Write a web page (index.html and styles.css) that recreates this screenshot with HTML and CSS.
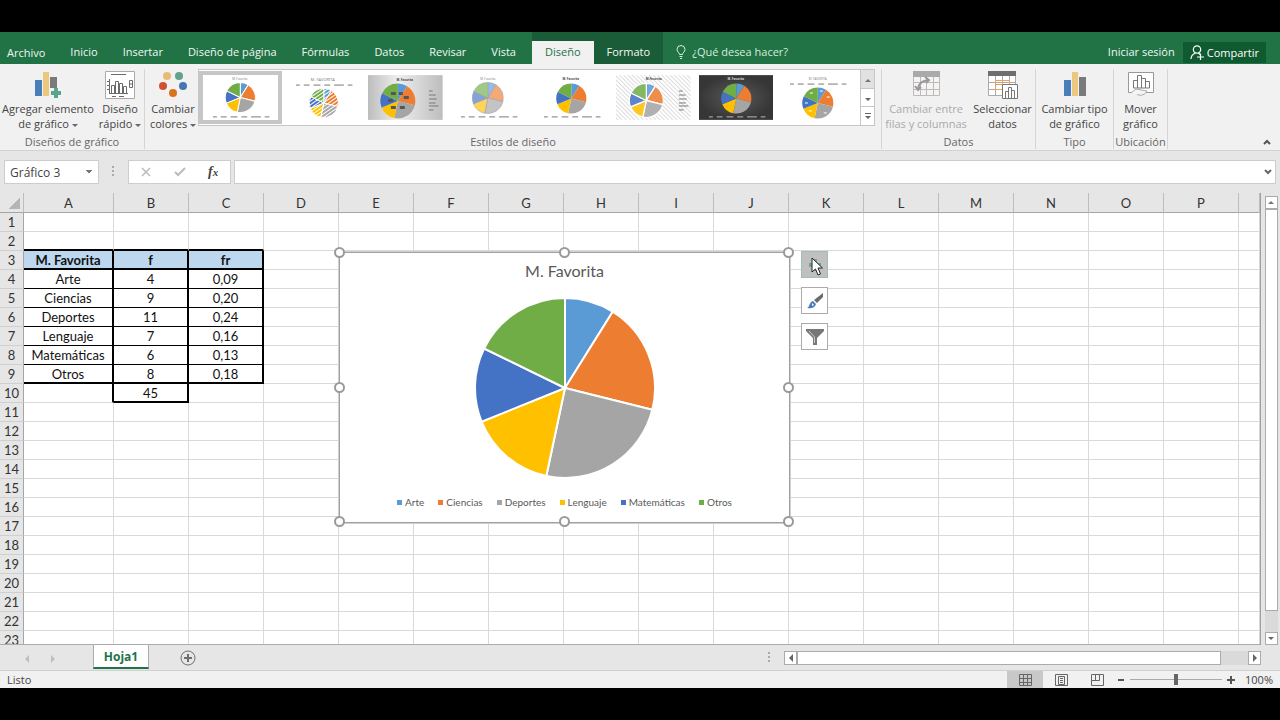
FILE: index.html
```html
<!doctype html>
<html lang="es">
<head>
    <meta charset="UTF-8">
    <meta name="viewport" content="width=device-width, initial-scale=1.0">
    <title>M. Favorita</title>
    <link rel="stylesheet" href="styles.css">
</head>
<body>
    <!-- shared drawings -->
    <svg class="defs" width="0" height="0">
        <defs>
            <symbol id="pie" viewBox="-92 -92 184 184">
                <path fill="#5b9bd5" d="M0 0V-90A90 90 0 0 1 47.7 -76.3Z"/>
                <path fill="#ed7d31" d="M0 0L47.7 -76.3A90 90 0 0 1 87.3 21.8Z"/>
                <path fill="#a5a5a5" d="M0 0L87.3 21.8A90 90 0 0 1 -18.7 88Z"/>
                <path fill="#ffc000" d="M0 0L-18.7 88A90 90 0 0 1 -83.4 33.7Z"/>
                <path fill="#4472c4" d="M0 0L-83.4 33.7A90 90 0 0 1 -80.9 -39.5Z"/>
                <path fill="#70ad47" d="M0 0L-80.9 -39.5A90 90 0 0 1 0 -90Z"/>
            </symbol>
            <pattern id="stripes" width="3" height="3" patternUnits="userSpaceOnUse" patternTransform="rotate(-35)">
                <rect width="3" height="2" fill="#fff"/>
            </pattern>
            <mask id="striped">
                <rect width="75" height="45" fill="url(#stripes)"/>
            </mask>
            <pattern id="hatch" width="3" height="3" patternUnits="userSpaceOnUse" patternTransform="rotate(45)">
                <rect width="3" height="3" fill="#fff"/>
                <rect width="3" height="1" fill="#dcdcdc"/>
            </pattern>
            <linearGradient id="silver">
                <stop offset="0" stop-color="#bdbdbd"/>
                <stop offset=".4" stop-color="#eee"/>
                <stop offset="1" stop-color="#bdbdbd"/>
            </linearGradient>
            <radialGradient id="dark">
                <stop offset="0" stop-color="#5a5a5a"/>
                <stop offset="1" stop-color="#363636"/>
            </radialGradient>
            <symbol id="keys" viewBox="0 0 58 2">
                <path d="M0 1H4M8 1H14M18 1H25M29 1H35M39 1H49M53 1H58" stroke="currentColor" stroke-width="1"/>
            </symbol>
            <symbol id="keys-side" viewBox="0 0 10 22">
                <path d="M0 1H4M0 5H7M0 9H8M0 13H7M0 16H10M0 20H5" stroke="#777" stroke-width="1"/>
            </symbol>
        </defs>
    </svg>

    <div class="app">
        <header class="titlebar">
            <nav class="tabs">
                <button class="tab tab-file">Archivo</button>
                <button class="tab">Inicio</button>
                <button class="tab">Insertar</button>
                <button class="tab">Diseño de página</button>
                <button class="tab">Fórmulas</button>
                <button class="tab">Datos</button>
                <button class="tab">Revisar</button>
                <button class="tab">Vista</button>
                <span class="context-tabs">
                    <button class="tab active">Diseño</button>
                    <button class="tab">Formato</button>
                </span>
                <button class="tab tell-me">
                    <svg width="10" height="14" viewBox="0 0 10 14" fill="none" stroke="#d5ecdd">
                        <path d="M3.500 9.500C3.500 7.500 1 7 1 4.500A4 4 0 0 1 9 4.500C9 7 6.500 7.500 6.500 9.500ZM3.500 11.500H6.500M4 13.500H6"/>
                    </svg>
                    ¿Qué desea hacer?
                </button>
            </nav>
            <button class="tab sign-in">Iniciar sesión</button>
            <button class="share">
                <svg width="14" height="15" viewBox="0 0 14 15" fill="none" stroke="#fff" stroke-width="1.200">
                    <circle cx="7" cy="4.500" r="3.700"/>
                    <path d="M1 14C1 11 3 9 5.500 8M8.500 8L10 9.500M7 12H14M10.500 8.500V15"/>
                </svg>
                Compartir
            </button>
        </header>

        <section class="ribbon">
            <div class="group group-layouts">
                <div class="tools">
                    <button class="tool">
                        <svg width="28" height="28" viewBox="0 0 28 28">
                            <path fill="#4a7ebb" d="M1 9H8V25H1Z"/>
                            <path fill="#ecc87e" d="M9 1H15V25H9Z"/>
                            <path fill="#7a7a7a" d="M16 6H23V17H16Z"/>
                            <path fill="#5aa58c" d="M20 17H24V20H27V24H24V27H20V24H17V20H20Z"/>
                        </svg>
                        <span>Agregar elemento<br>de gráfico <i class="arrow"></i></span>
                    </button>
                    <button class="tool">
                        <svg width="30" height="28" viewBox="0 0 30 28" fill="none" stroke="#6b6b6b">
                            <path fill="#fff" stroke="#aaa" d="M.5 .5H29.500V27.500H.5Z"/>
                            <path d="M6 3.500H21M4.500 8V23M2 10.500H4M2 14.500H4M2 18.500H4M4 22.500H23M7 25.500H11M14 25.500H19"/>
                            <path d="M6.500 22V14.500H9.500V22M10.500 22V10.500H13.500V22M14.500 22V12.500H17.500V22M18.500 22V15.500H21.500V22M24.500 9.500H27.500V16.500H24.500ZM24 13H28"/>
                        </svg>
                        <span>Diseño<br>rápido <i class="arrow"></i></span>
                    </button>
                </div>
                <h2>Diseños de gráfico</h2>
            </div>

            <div class="group group-styles">
                <div class="tools">
                    <button class="tool">
                        <svg width="28" height="28" viewBox="0 0 28 28">
                            <circle cx="8" cy="5" r="4" fill="#e8bd71"/>
                            <circle cx="20" cy="5" r="4" fill="#62a18c"/>
                            <circle cx="4" cy="15" r="4" fill="#cf5033"/>
                            <circle cx="24" cy="15" r="4" fill="#4676b4"/>
                            <circle cx="14" cy="22" r="4" fill="#d9731e"/>
                        </svg>
                        <span>Cambiar<br>colores <i class="arrow"></i></span>
                    </button>
                    <div class="gallery">
                        <div class="thumbs">
                            <button class="thumb selected" aria-label="Estilo 1">
                                <svg viewBox="0 0 75 45">
                                    <rect width="75" height="45" fill="#fff"/>
                                    <text x="37" y="5">M. Favorita</text>
                                    <use href="#pie" x="22" y="7" width="31" height="31" stroke="#fff" stroke-width="6"/>
                                    <use href="#keys" x="10" y="41" width="57" height="2"/>
                                </svg>
                            </button>
                            <button class="thumb" aria-label="Estilo 2">
                                <svg viewBox="0 0 75 45">
                                    <rect width="75" height="45" fill="#fff"/>
                                    <text class="wide" x="37" y="6">M. FAVORITA</text>
                                    <use href="#keys" x="10" y="9" width="57" height="2"/>
                                    <g mask="url(#striped)">
                                        <use href="#pie" x="23" y="13" width="30" height="30" stroke="#fff" stroke-width="6"/>
                                    </g>
                                </svg>
                            </button>
                            <button class="thumb" aria-label="Estilo 3">
                                <svg viewBox="0 0 75 45">
                                    <rect width="75" height="45" fill="url(#silver)"/>
                                    <text class="bold" x="37" y="6">M. Favorita</text>
                                    <use href="#pie" x="12" y="8" width="36" height="36"/>
                                    <path fill="#555" d="M23 17H28V20H23ZM31 17H35V20H31ZM36 21H41V24H36ZM20 24H25V27H20ZM23 31H28V34H23ZM32 31H37V34H32Z"/>
                                    <use href="#keys-side" x="61" y="15" width="10" height="22"/>
                                </svg>
                            </button>
                            <button class="thumb" aria-label="Estilo 4">
                                <svg viewBox="0 0 75 45">
                                    <rect width="75" height="45" fill="#fff"/>
                                    <text x="37" y="5">M. Favorita</text>
                                    <g opacity=".65">
                                        <use href="#pie" x="21" y="7" width="32" height="32" stroke="#667" stroke-width="3"/>
                                    </g>
                                    <use href="#keys" x="10" y="41" width="57" height="2"/>
                                </svg>
                            </button>
                            <button class="thumb" aria-label="Estilo 5">
                                <svg viewBox="0 0 75 45">
                                    <rect width="75" height="45" fill="#fff"/>
                                    <text class="bold" x="37" y="5">M. Favorita</text>
                                    <use href="#pie" x="22" y="8" width="31" height="31"/>
                                    <use href="#keys" x="10" y="41" width="57" height="2"/>
                                </svg>
                            </button>
                            <button class="thumb" aria-label="Estilo 6">
                                <svg viewBox="0 0 75 45">
                                    <rect width="75" height="45" fill="url(#hatch)"/>
                                    <text class="bold" x="38" y="5">M.Favorita</text>
                                    <g opacity=".85">
                                        <use href="#pie" x="13" y="8" width="35" height="35" stroke="#fff" stroke-width="7"/>
                                    </g>
                                    <use href="#keys-side" x="63" y="15" width="10" height="22"/>
                                </svg>
                            </button>
                            <button class="thumb" aria-label="Estilo 7">
                                <svg viewBox="0 0 75 45">
                                    <rect width="75" height="45" fill="url(#dark)"/>
                                    <text class="bold light" x="37" y="5">M. Favorita</text>
                                    <use href="#pie" x="22" y="8" width="31" height="31"/>
                                    <use class="light" href="#keys" x="10" y="41" width="57" height="2"/>
                                </svg>
                            </button>
                            <button class="thumb" aria-label="Estilo 8">
                                <svg viewBox="0 0 75 45">
                                    <rect width="75" height="45" fill="#fff"/>
                                    <text x="37" y="5">M. FAVORITA</text>
                                    <use href="#keys" x="9" y="8" width="57" height="2"/>
                                    <use href="#pie" x="21" y="12" width="32" height="32"/>
                                    <path stroke="#fff" d="M29 18H32M39 16H42M46 22H49M24 28H27M28 36H31M43 38H46"/>
                                </svg>
                            </button>
                        </div>
                        <div class="gallery-nav">
                            <button class="off" aria-label="Anterior"><i class="arrow up"></i></button>
                            <button aria-label="Siguiente"><i class="arrow"></i></button>
                            <button class="more" aria-label="Más"><i class="arrow"></i></button>
                        </div>
                    </div>
                </div>
                <h2>Estilos de diseño</h2>
            </div>

            <div class="group group-data">
                <div class="tools">
                    <button class="tool" disabled>
                        <svg width="28" height="28" viewBox="0 0 28 28" fill="none">
                            <path fill="#f7f3f3" stroke="#bbb" d="M1.500 1.500H27.500V24.500H1.500ZM1.500 11.500H27.500M1.500 18.500H27.500M8.500 5V24M14.500 5V24M21.500 5V24"/>
                            <path fill="#aaa" d="M1 0H28V6H1Z"/>
                            <path stroke="#999" stroke-width="2" d="M6 18C7 12 10 10 16 9M13 6L17 9L14 12M3 15L6 19L9 16"/>
                        </svg>
                        <span>Cambiar entre<br>filas y columnas</span>
                    </button>
                    <button class="tool">
                        <svg width="30" height="28" viewBox="0 0 30 28" fill="none">
                            <path fill="#fff" stroke="#aaa" d="M.5 1.500H27.500V24.500H.5ZM.5 11.500H27.500M.5 18.500H27.500M7.500 5V24M14.500 5V24M21.500 5V24"/>
                            <path stroke="#e9a35d" d="M7.500 9.500H21.500V18.500H7.500ZM14.500 9V18M7 13.500H21"/>
                            <path fill="#6e6e6e" d="M0 0H28V5H0Z"/>
                            <path fill="#fff" stroke="#777" d="M14.500 13.500H29.500V27.500H14.500ZM17.500 27V20.500H20.500V27M20.500 27V16.500H23.500V27M23.500 27V19.500H26.500V27"/>
                        </svg>
                        <span>Seleccionar<br>datos</span>
                    </button>
                </div>
                <h2>Datos</h2>
            </div>

            <div class="group group-type">
                <div class="tools">
                    <button class="tool">
                        <svg width="24" height="28" viewBox="0 0 24 28">
                            <path fill="#4a7ebb" d="M1 9H8V25H1Z"/>
                            <path fill="#ecc87e" d="M9 1H15V25H9Z"/>
                            <path fill="#7a7a7a" d="M16 6H23V25H16Z"/>
                        </svg>
                        <span>Cambiar tipo<br>de gráfico</span>
                    </button>
                </div>
                <h2>Tipo</h2>
            </div>

            <div class="group group-location">
                <div class="tools">
                    <button class="tool">
                        <svg width="28" height="28" viewBox="0 0 28 28" fill="none" stroke="#777">
                            <path fill="#fff" stroke="#999" d="M1.500 1.500H26.500V21.500H1.500Z"/>
                            <path d="M6.500 17V9.500H10.500V17ZM10.500 17V4.500H14.500V17ZM14.500 17V7.500H18.500V17ZM18.500 17V10.500H22.500V17Z"/>
                            <path fill="#f5f5f5" stroke="#aaa" d="M4 22L9 18L20 20C18 24 14 25 10 23.500"/>
                        </svg>
                        <span>Mover<br>gráfico</span>
                    </button>
                </div>
                <h2>Ubicación</h2>
            </div>

            <button class="collapse" aria-label="Contraer la cinta">
                <svg width="8" height="6" viewBox="0 0 8 6" fill="none" stroke="#555" stroke-width="2"><path d="M1 5L4 2L7 5"/></svg>
            </button>
        </section>

        <section class="formula-bar">
            <select class="name-box" aria-label="Cuadro de nombres">
                <option>Gráfico 3</option>
            </select>
            <span class="grip"></span>
            <div class="formula-buttons">
                <button aria-label="Cancelar">
                    <svg width="10" height="10" viewBox="0 0 10 10" stroke="#bbb" stroke-width="1.500"><path d="M1 1L9 9M9 1L1 9"/></svg>
                </button>
                <button aria-label="Introducir">
                    <svg width="12" height="10" viewBox="0 0 12 10" fill="none" stroke="#bbb" stroke-width="2"><path d="M1 5L4 8L11 1"/></svg>
                </button>
                <button class="fx" aria-label="Insertar función">f<sub>x</sub></button>
            </div>
            <div class="formula">
                <input type="text" aria-label="Barra de fórmulas">
                <svg width="8" height="6" viewBox="0 0 8 6" fill="none" stroke="#666" stroke-width="2"><path d="M1 1L4 4L7 1"/></svg>
            </div>
        </section>

        <main class="workspace">
            <div class="sheet">
                <table id="grid"></table>

                <figure class="chart">
                    <figcaption>M. Favorita</figcaption>
                    <svg class="chart-pie" width="184" height="184" stroke="#fff" stroke-width="2"><use href="#pie" width="184" height="184"/></svg>
                    <ul class="legend">
                        <li class="arte">Arte</li>
                        <li class="ciencias">Ciencias</li>
                        <li class="deportes">Deportes</li>
                        <li class="lenguaje">Lenguaje</li>
                        <li class="matematicas">Matemáticas</li>
                        <li class="otros">Otros</li>
                    </ul>
                    <i class="handle top left"></i>
                    <i class="handle top center"></i>
                    <i class="handle top right"></i>
                    <i class="handle middle left"></i>
                    <i class="handle middle right"></i>
                    <i class="handle bottom left"></i>
                    <i class="handle bottom center"></i>
                    <i class="handle bottom right"></i>
                    <div class="chart-buttons">
                        <button class="pressed" aria-label="Elementos de gráfico">
                            <svg width="14" height="14" viewBox="0 0 14 14"><path fill="#6aa792" d="M5 1H9V5H13V9H9V13H5V9H1V5H5Z"/></svg>
                        </button>
                        <button aria-label="Estilos de gráfico">
                            <svg width="18" height="18" viewBox="0 0 18 18">
                                <path fill="#6b6b6b" d="M17 1V5L11 11L8 8Z"/>
                                <path fill="#4a7ebb" d="M7 9L10 12C9 16 5 17 1 16C4 15 3 10 7 9Z"/>
                                <path fill="#fff" d="M6 11L8 13L6 14Z"/>
                            </svg>
                        </button>
                        <button aria-label="Filtros de gráfico">
                            <svg width="18" height="16" viewBox="0 0 18 16">
                                <path fill="#777" d="M0 0H18V2L11 9V16H7V9L0 2Z"/>
                                <path stroke="#ccc" d="M3 2L8.500 8V14" fill="none"/>
                            </svg>
                        </button>
                    </div>
                    <svg class="cursor" width="14" height="20" viewBox="0 0 14 20">
                        <path fill="#fff" stroke="#222" d="M1 1V15L4.500 12L7 18L9.500 17L7 11H11.500Z"/>
                    </svg>
                </figure>
            </div>
            <div class="vscroll">
                <button aria-label="Subir"><i class="arrow up"></i></button>
                <div class="track"><div class="bar"></div></div>
                <button aria-label="Bajar"><i class="arrow"></i></button>
            </div>
        </main>

        <footer class="sheet-bar">
            <button class="nav" aria-label="Hoja anterior"><i class="arrow back"></i></button>
            <button class="nav" aria-label="Hoja siguiente"><i class="arrow next"></i></button>
            <button class="sheet-tab">Hoja1</button>
            <button class="add-sheet" aria-label="Hoja nueva">
                <svg width="16" height="16" viewBox="0 0 16 16" fill="none" stroke="#6e6e6e">
                    <circle cx="8" cy="8" r="7"/>
                    <path stroke-width="2" d="M4 8H12M8 4V12"/>
                </svg>
            </button>
            <span class="grip"></span>
            <div class="hscroll">
                <button aria-label="Izquierda"><i class="arrow back"></i></button>
                <div class="track"><div class="bar"></div></div>
                <button aria-label="Derecha"><i class="arrow next"></i></button>
            </div>
        </footer>

        <div class="status">
            <span class="ready">Listo</span>
            <button class="view active" aria-label="Normal">
                <svg width="13" height="12" viewBox="0 0 13 12" fill="none" stroke="#666"><path d="M.5 .5H12.500V11.500H.5ZM4.500 0V12M8.500 0V12M0 4.500H13M0 8.500H13"/></svg>
            </button>
            <button class="view" aria-label="Diseño de página">
                <svg width="13" height="12" viewBox="0 0 13 12" fill="none" stroke="#666"><path d="M.5 .5H12.500V11.500H.5ZM3.500 2.500H9.500V10.500H3.500ZM5 4.500H8M5 6.500H8M5 8.500H8"/></svg>
            </button>
            <button class="view" aria-label="Vista previa de salto de página">
                <svg width="13" height="12" viewBox="0 0 13 12" fill="none" stroke="#666"><path d="M.5 .5H12.500V11.500H.5ZM.5 6.500H8.500V.5M4.500 0V6"/></svg>
            </button>
            <button class="zoom-step" aria-label="Alejar"><svg width="8" height="8" viewBox="0 0 8 8"><path fill="#555" d="M1 3H7V5H1Z"/></svg></button>
            <input class="zoom" type="range" min="0" max="100" value="50" aria-label="Zoom">
            <button class="zoom-step" aria-label="Acercar"><svg width="8" height="8" viewBox="0 0 8 8"><path fill="#555" d="M3 0H5V3H8V5H5V8H3V5H0V3H3Z"/></svg></button>
            <span class="percent">100%</span>
        </div>
    </div>
    <script src="script.js"></script>
</body>
</html>
```

FILE: styles.css
```css
* {
    margin: 0;
    padding: 0;
    box-sizing: border-box;
}
body {
    min-height: 100vh;
    padding: 32px 0;
    background-color: #000;
    font: 11px/15px "Open Sans", "Noto Sans", sans-serif;
    color: #444;
    display: flex;
    flex-direction: column;
}
button, select, input {
    font: inherit;
    color: inherit;
    border: 0;
    background: none;
    outline: none;
}
svg {
    display: block;
}
.defs {
    position: absolute;
}
.app {
    flex: 1;
    display: flex;
    flex-direction: column;
    background-color: #e6e6e6;
    overflow: hidden;
}
.arrow {
    display: inline-block;
    border: 3px solid transparent;
    border-top-color: #666;
    border-bottom: 0;
    vertical-align: middle;
}
.arrow.up {
    border: 3px solid transparent;
    border-bottom-color: #777;
    border-top: 0;
}
.arrow.back {
    border: 4px solid transparent;
    border-right-color: #666;
    border-left: 0;
}
.arrow.next {
    border: 4px solid transparent;
    border-left-color: #666;
    border-right: 0;
}
.grip {
    width: 2px;
    height: 12px;
    background: repeating-linear-gradient(#aaa 0 2px, transparent 2px 4px);
}

/* title bar */
.titlebar {
    height: 32px;
    display: flex;
    align-items: flex-end;
    background-color: #217346;
    padding-right: 14px;
}
.tabs {
    flex: 1;
    display: flex;
    align-items: flex-end;
    align-self: stretch;
    gap: 1px;
}
.tab {
    height: 23px;
    padding: 0 12px 2px;
    color: #f0f7f2;
    white-space: nowrap;
}
.tab-file {
    padding: 0 12px 0 7px;
}
.context-tabs {
    display: flex;
    align-items: flex-end;
    align-self: stretch;
    margin-left: 3px;
    background-color: #1b5c38;
}
.context-tabs .tab {
    padding: 0 13px 2px;
}
.context-tabs .active {
    background-color: #f1f1f1;
    color: #217346;
}
.tell-me {
    display: flex;
    align-items: center;
    gap: 6px;
    color: #d5ecdd;
}
.sign-in {
    padding-right: 8px;
}
.share {
    height: 21px;
    margin-bottom: 1px;
    padding: 0 7px;
    display: flex;
    align-items: center;
    gap: 3px;
    background-color: #0f5a30;
    color: #fff;
}

/* ribbon */
.ribbon {
    height: 87px;
    display: flex;
    padding: 5px 0 1px;
    background-color: #f1f1f1;
    border-bottom: 1px solid #d2d2d2;
}
.group {
    display: flex;
    flex-direction: column;
    justify-content: space-between;
    border-right: 1px solid #d5d5d5;
}
.group h2 {
    font-size: 11px;
    font-weight: normal;
    line-height: 15px;
    text-align: center;
    color: #666;
}
.tools {
    display: flex;
    justify-content: center;
}
.tool {
    flex: 1;
    display: flex;
    flex-direction: column;
    align-items: center;
    gap: 2px;
    padding-top: 2px;
    white-space: nowrap;
}
.tool:disabled {
    color: #aaa;
}
.group-layouts {
    width: 145px;
}
.group-layouts .tool:first-child {
    flex: 2;
}
.group-styles {
    flex: 1;
}
.group-styles .tools {
    padding-right: 6px;
}
.group-styles .tool {
    flex: 0 0 53px;
    padding-left: 3px;
}
.group-data {
    width: 154px;
}
.group-data .tool {
    flex: auto;
}
.group-type {
    width: 78px;
}
.group-location {
    width: 54px;
}
.collapse {
    width: 112px;
    display: flex;
    align-items: flex-end;
    justify-content: flex-end;
    padding: 0 9px 4px 0;
}
.gallery {
    flex: 1;
    height: 57px;
    display: flex;
    background-color: #fff;
    border: 1px solid #c6c6c6;
}
.thumbs {
    flex: 1;
    display: flex;
    gap: 8px;
    padding: 5px 4px;
}
.thumb {
    flex: 1;
    height: 45px;
}
.thumb.selected {
    box-shadow: 0 0 0 4px #c6c6c6;
}
.thumb svg {
    width: 100%;
    height: 45px;
    color: #777;
}
.thumb text {
    font-size: 3px;
    text-anchor: middle;
    fill: #777;
}
.thumb .wide {
    font-size: 4px;
}
.thumb .bold {
    font-weight: bold;
    fill: #444;
}
.thumb .light {
    fill: #ddd;
    color: #bbb;
}
.gallery-nav {
    width: 14px;
    display: flex;
    flex-direction: column;
    border-left: 1px solid #c6c6c6;
}
.gallery-nav button {
    flex: 1;
    line-height: 1;
    border-bottom: 1px solid #c6c6c6;
}
.gallery-nav button:last-child {
    border-bottom: 0;
}
.gallery-nav .off {
    background-color: #e1e1e1;
}
.more .arrow {
    position: relative;
}
.more .arrow:before {
    content: "";
    position: absolute;
    left: -3px;
    top: -6px;
    width: 6px;
    height: 1px;
    background-color: #666;
}

/* formula bar */
.formula-bar {
    height: 42px;
    display: flex;
    align-items: center;
    padding: 0 4px;
}
.name-box {
    width: 95px;
    height: 24px;
    padding-left: 5px;
    font-size: 12px;
    appearance: none;
    border: 1px solid #cdcdcd;
    background: linear-gradient(to bottom right, #777 50%, transparent 50%) 84px 9px / 3px 4px no-repeat,
                linear-gradient(to bottom left, #777 50%, transparent 50%) 81px 9px / 3px 4px no-repeat,
                #fff;
}
.formula-bar .grip {
    margin: 0 14px 0 13px;
}
.formula-buttons {
    width: 103px;
    height: 24px;
    display: flex;
    border: 1px solid #cdcdcd;
    background-color: #fff;
}
.formula-buttons button {
    flex: 1;
    display: flex;
    align-items: center;
    justify-content: center;
}
.formula-buttons .fx {
    font: italic bold 14px "Liberation Serif", serif;
}
.fx sub {
    font-size: 11px;
}
.formula {
    flex: 1;
    height: 24px;
    display: flex;
    align-items: center;
    margin-left: 3px;
    padding: 0 3px;
    border: 1px solid #cdcdcd;
    background-color: #fff;
}
.formula input {
    flex: 1;
}

/* sheet */
.workspace {
    flex: 1 1 0;
    min-height: 200px;
    display: flex;
    overflow: hidden;
}
.sheet {
    flex: 1;
    position: relative;
    overflow: hidden;
    border-right: 1px solid #9e9e9e;
    border-bottom: 1px solid #ababab;
}
#grid {
    width: 100%;
    table-layout: fixed;
    border-collapse: separate;
    border-spacing: 0;
    background-color: #fff;
    font: 13px/16px Lato, sans-serif;
    color: #111;
}
#grid th, #grid td {
    height: 19px;
    border-right: 1px solid #d9d9d9;
    border-bottom: 1px solid #d9d9d9;
    text-align: center;
    white-space: nowrap;
}
#grid thead th, #grid tbody th {
    background-color: #e6e6e6;
    font-weight: normal;
    color: #333;
}
#grid thead th {
    height: 20px;
    border-right-color: #bdbdbd;
    border-bottom-color: #a5a5a5;
}
#grid tbody th {
    border-right-color: #a5a5a5;
    border-bottom-color: #cfcfcf;
}
#grid .corner {
    background: linear-gradient(to bottom right, transparent 50%, #b5b5b5 50%) 9px 5px / 11px 11px no-repeat, #e6e6e6;
}
.col-head {
    width: 24px;
}
.col-a {
    width: 90px;
}
.col {
    width: 75px;
}
#grid .edge-right {
    border-right: 2px solid #000;
}
#grid .line {
    border-bottom: 1px solid #000;
}
#grid .edge-bottom {
    border-bottom: 2px solid #000;
}
#grid .title {
    background-color: #bdd7ee;
    font-weight: bold;
}

/* chart */
.chart {
    position: absolute;
    left: 339px;
    top: 59px;
    width: 451px;
    height: 271px;
    padding-top: 8px;
    display: flex;
    flex-direction: column;
    align-items: center;
    background-color: #fff;
    border: 1px solid #a0a0a0;
    box-shadow: 0 0 0 1px #d0d0d0;
    font-family: Lato, sans-serif;
    color: #595959;
}
.chart figcaption {
    font-size: 16px;
    line-height: 20px;
}
.chart-pie {
    margin-top: 15px;
}
.legend {
    display: flex;
    gap: 14px;
    margin-top: 15px;
    font-size: 10px;
    line-height: 14px;
    list-style: none;
}
.legend li {
    display: flex;
    align-items: center;
    gap: 3px;
}
.legend li:before {
    content: "";
    width: 5px;
    height: 5px;
    background-color: #5b9bd5;
}
.legend .ciencias:before {
    background-color: #ed7d31;
}
.legend .deportes:before {
    background-color: #a5a5a5;
}
.legend .lenguaje:before {
    background-color: #ffc000;
}
.legend .matematicas:before {
    background-color: #4472c4;
}
.legend .otros:before {
    background-color: #70ad47;
}
.handle {
    position: absolute;
    width: 11px;
    height: 11px;
    margin: -6px 0 0 -6px;
    border: 2px solid #9a9a9a;
    border-radius: 50%;
    background-color: #fff;
}
.handle.top {
    top: 0;
}
.handle.middle {
    top: 50%;
}
.handle.bottom {
    top: 100%;
}
.handle.left {
    left: 0;
}
.handle.center {
    left: 50%;
}
.handle.right {
    left: 100%;
}
.chart-buttons {
    position: absolute;
    left: 461px;
    top: -2px;
    display: flex;
    flex-direction: column;
    gap: 9px;
}
.chart-buttons button {
    width: 27px;
    height: 27px;
    display: flex;
    align-items: center;
    justify-content: center;
    border: 1px solid #ababab;
    background-color: #fff;
}
.chart-buttons .pressed {
    background-color: #c0c0c0;
    border-color: #9fbfb3;
}
.cursor {
    position: absolute;
    left: 471px;
    top: 4px;
}

/* scroll bars */
.vscroll {
    width: 19px;
    display: flex;
    flex-direction: column;
    align-items: center;
    padding: 3px 2px 0 3px;
}
.vscroll button, .hscroll button {
    width: 13px;
    height: 13px;
    display: flex;
    align-items: center;
    justify-content: center;
    border: 1px solid #ababab;
    background-color: #fff;
}
.track {
    flex: 1;
    background-color: #dadada;
}
.bar {
    border: 1px solid #ababab;
    background-color: #fff;
}
.vscroll .track {
    width: 13px;
}
.vscroll .bar {
    height: 95%;
}
.sheet-bar {
    height: 26px;
    display: flex;
    align-items: center;
    padding-left: 14px;
    border-bottom: 1px solid #d0d0d0;
}
.nav {
    width: 26px;
    opacity: .3;
    line-height: 1;
}
.sheet-tab {
    align-self: flex-start;
    width: 56px;
    height: 24px;
    margin-left: 27px;
    background-color: #fff;
    border: 1px solid #ababab;
    border-top: 0;
    border-bottom: 2px solid #217346;
    color: #217346;
    font-size: 12px;
    font-weight: bold;
}
.add-sheet {
    flex: 1;
    padding-left: 31px;
}
.hscroll {
    width: 477px;
    display: flex;
    margin: 0 19px 0 14px;
}
.hscroll button, .hscroll .bar {
    height: 14px;
}
.hscroll .bar {
    width: 94%;
}

/* status bar */
.status {
    height: 17px;
    display: flex;
    align-items: center;
    padding: 0 7px;
    background-color: #f1f1f1;
}
.ready {
    flex: 1;
}
.view {
    width: 36px;
    height: 17px;
    display: flex;
    align-items: center;
    justify-content: center;
}
.view.active {
    background-color: #c8c8c8;
}
.zoom-step {
    margin: 0 2px;
}
.zoom {
    width: 92px;
    height: 12px;
    margin: 0 3px;
    appearance: none;
    background: linear-gradient(#aaa, #aaa) center / 100% 1px no-repeat;
}
.zoom::-webkit-slider-thumb {
    appearance: none;
    width: 4px;
    height: 11px;
    background-color: #666;
}
.percent {
    margin-left: 8px;
}
```

FILE: script.js
```js
var letters = "ABCDEFGHIJKLMNOP".split("");
var ROWS = 23;

//filas 3 a 10 de la tabla
var data = {
    3: ["M. Favorita", "f", "fr"],
    4: ["Arte", "4", "0,09"],
    5: ["Ciencias", "9", "0,20"],
    6: ["Deportes", "11", "0,24"],
    7: ["Lenguaje", "7", "0,16"],
    8: ["Matemáticas", "6", "0,13"],
    9: ["Otros", "8", "0,18"],
    10: ["", "45", ""]
};

function cellClass(row, col) {
    var names = [];
    if (col > 2) {
        return "";
    }
    if (row >= 3 && row <= 9) {
        names.push("edge-right");
    }
    if (row === 10 && col < 2) {
        names.push("edge-right");
    }
    if (row === 2 || row === 3 || row === 9 || (row === 10 && col === 1)) {
        names.push("edge-bottom");
    } else if (row > 3 && row < 9) {
        names.push("line");
    }
    if (row === 3) {
        names.push("title");
    }
    return names.join(" ");
}

function buildGrid() {
    var html = "<colgroup><col class='col-head'><col class='col-a'>";
    for (var i = 1; i < letters.length; i++) {
        html += "<col class='col'>";
    }
    html += "<col></colgroup><thead><tr><th class='corner'></th>";
    letters.forEach(function(letter) {
        html += "<th>" + letter + "</th>";
    });
    html += "<th></th></tr></thead><tbody>";
    for (var row = 1; row <= ROWS; row++) {
        html += "<tr><th>" + row + "</th>";
        for (var col = 0; col <= letters.length; col++) {
            var text = data[row] && data[row][col] || "";
            html += "<td class='" + cellClass(row, col) + "'>" + text + "</td>";
        }
        html += "</tr>";
    }
    document.getElementById("grid").innerHTML = html + "</tbody>";
}

buildGrid();
```
